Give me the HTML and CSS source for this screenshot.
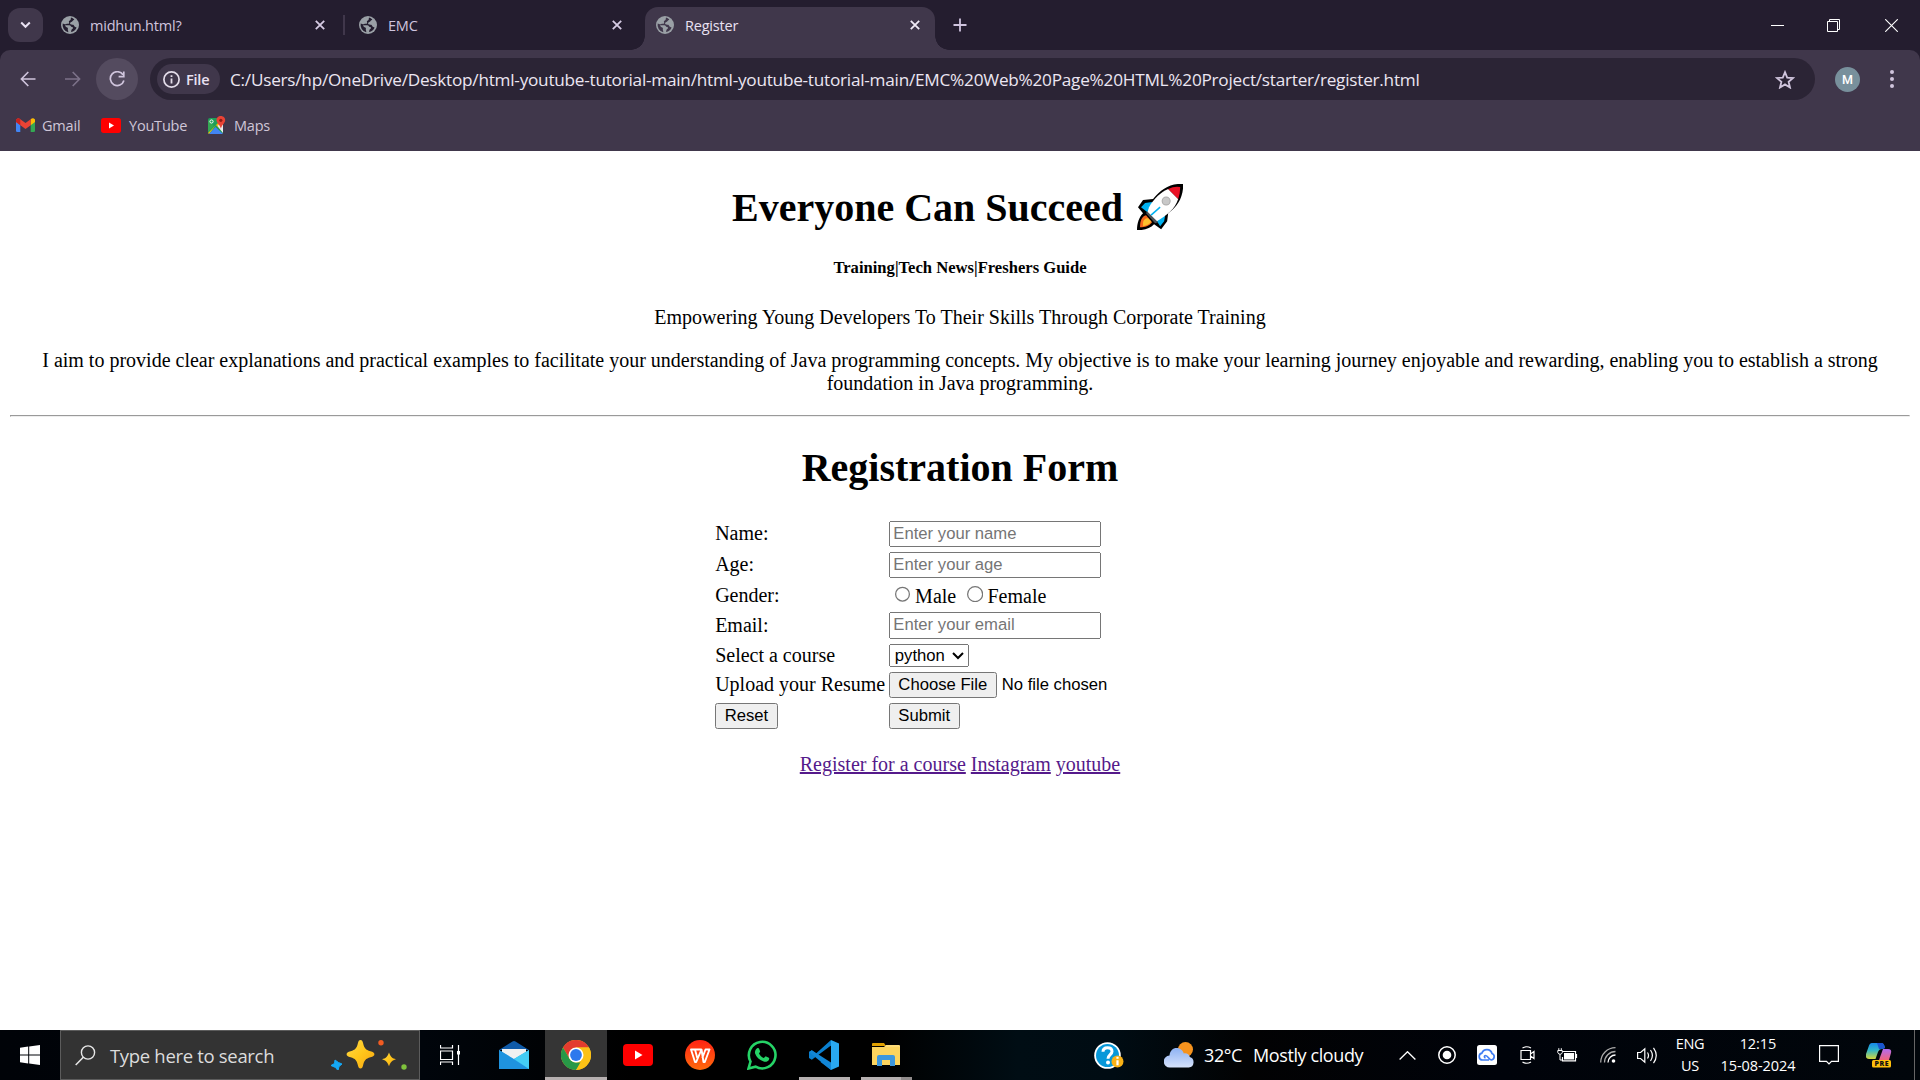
FILE: index.html
```html
<!DOCTYPE html>
<html lang="en">
<head>
<meta charset="utf-8">
<title>Register</title>
<link rel="stylesheet" href="styles.css">
</head>
<body>
<svg class="defs" width="0" height="0">
  <symbol id="globe" viewBox="0 0 18 18"><circle cx="9" cy="9" r="9" fill="#9aa0a6"/><path d="M10 1.6c-.5 1 .3 2-.8 2.600-1.300.5-1.600 1.300-1.100 2.300.5.900-.6 1.300-1.600 1.200-1.300 0-1.500.9-2.800.5L1.700 7.500a7.400 7.400 0 0 0 5.500 8.700c.4-1.200-.8-2.100-.3-3.200.3-.8-.3-1.500-1.200-1.700-1-.3-1.300-1.300-1.700-2.100 1.700-.2 3 .1 4.400.1 1.400.2 1.200 1.500 2.600 1.700 1.300.2 1.400 1.500.2 2-.9.5-.9 1.800-1.100 3a7.300 7.300 0 0 0 5.500-4.500c-.8-.4-1.800-.4-2.200-1.300-.4-1-.8-1.600-2-1.500-1.500 0-2.600-.6-2.300-1.700.3-1 1.800-.7 2.300-1.700.4-.9 1.400-1 1.900-1.800A7 7 0 0 0 10 1.600z" fill="currentColor"/></symbol>
  <symbol id="cross" viewBox="0 0 10 10"><path d="M.8.8l8.400 8.400M9.200.8L.8 9.200" fill="none" stroke="currentColor" stroke-width="1.800"/></symbol>
  <symbol id="youtube" viewBox="0 0 30 22"><rect width="30" height="22" rx="4" fill="#f00"/><path d="M12 6.500v9l7.500-4.500z" fill="#fff"/></symbol>
</svg>

<div class="tabstrip">
  <div class="tab-search"><svg width="11" height="8" viewBox="0 0 11 8"><path d="M1.200 1.500l4.300 4.300 4.300-4.300" fill="none" stroke="#e9e1f2" stroke-width="2"/></svg></div>
  <div class="tab first"><svg class="globe"><use href="#globe"/></svg><span>midhun.html?</span><svg class="x"><use href="#cross"/></svg></div>
  <div class="tab-sep"></div>
  <div class="tab second"><svg class="globe"><use href="#globe"/></svg><span>EMC</span><svg class="x"><use href="#cross"/></svg></div>
  <div class="tab active"><svg class="globe"><use href="#globe"/></svg><span>Register</span><svg class="x"><use href="#cross"/></svg></div>
  <svg class="plus" width="14" height="14" viewBox="0 0 14 14"><path d="M7 .5v13M.5 7h13" stroke="#cfc4de" stroke-width="1.800"/></svg>
  <div class="window-controls">
    <svg viewBox="0 0 13 13"><path d="M0 6.500h13" stroke="#fff" stroke-width="1"/></svg>
    <svg class="restore" viewBox="0 0 13 13"><path d="M.5 2.500h10v10H.5zM2.500 2.500v-2h10v10h-2" fill="none" stroke="#fff"/></svg>
    <svg viewBox="0 0 13 13"><path d="M.2.2l12.600 12.600M12.800.2L.2 12.800" stroke="#fff" stroke-width="1.100"/></svg>
  </div>
</div>

<div class="toolbar">
  <div class="navbar">
    <svg class="back" width="16" height="16" viewBox="0 0 16 16"><path d="M15.500 8H1.500M8.300 1L1.400 8l6.900 7" fill="none" stroke="#d0c5dd" stroke-width="1.600"/></svg>
    <svg class="forward" width="16" height="16" viewBox="0 0 16 16"><path d="M0 8h14.500M7.700 1l6.900 7-6.900 7" fill="none" stroke="#7c7289" stroke-width="1.600"/></svg>
    <div class="reload"><svg width="16" height="16" viewBox="0 0 16 16"><path d="M14 3.800A6.900 6.900 0 1 0 14.900 9.500M14.800.5v5.200H9.600" fill="none" stroke="#d0c5dd" stroke-width="1.700"/></svg></div>
    <div class="omnibox">
      <div class="chip"><svg width="17" height="17" viewBox="0 0 17 17"><circle cx="8.500" cy="8.500" r="7.600" fill="none" stroke="#e3dce9" stroke-width="1.700"/><path d="M8.500 7.500v5M8.500 4.200v1.800" stroke="#e3dce9" stroke-width="1.800"/></svg><b>File</b></div>
      <span class="url">C:/Users/hp/OneDrive/Desktop/html-youtube-tutorial-main/html-youtube-tutorial-main/EMC%20Web%20Page%20HTML%20Project/starter/register.html</span>
      <svg class="star" width="20" height="19" viewBox="0 0 20 19"><path d="M10 2.200l2.200 5.400 5.800.4-4.400 3.800 1.400 5.700-5-3.100-5 3.100 1.400-5.700L2 8l5.800-.4z" fill="none" stroke="#d0c5dd" stroke-width="1.800"/></svg>
    </div>
    <div class="avatar">M</div>
    <svg class="dots" width="4" height="18" viewBox="0 0 4 18"><g fill="#d0c5dd"><circle cx="2" cy="2" r="2"/><circle cx="2" cy="9" r="2"/><circle cx="2" cy="16" r="2"/></g></svg>
  </div>
  <div class="bookmarks">
    <svg width="19" height="14" viewBox="0 0 19 14"><path d="M0 3h4.300v11H1.300Q0 14 0 12.700z" fill="#4285f4"/><path d="M14.700 3H19v9.700q0 1.300-1.300 1.300h-3z" fill="#34a853"/><path d="M14.700 1.200Q17-1 19 1.500V4l-4.300 3.300z" fill="#fbbc04"/><path d="M0 1.800Q1.700-1 4.300 1.200L9.500 5l5.200-3.800v6L9.500 11 0 4z" fill="#ea4335"/><path d="M0 1.800Q1.700-1 4.300 1.200v6L0 4z" fill="#c5221f"/></svg><span class="gmail">Gmail</span>
    <svg width="20" height="15" viewBox="0 0 30 22" preserveAspectRatio="none"><use href="#youtube"/></svg><span class="yt">YouTube</span>
    <svg width="19" height="19" viewBox="0 0 19 19"><rect x="1" y="2" width="15" height="16" rx="2" fill="#1e9e58"/><path d="M7 10l-6 6V4z" fill="#34a853"/><path d="M1 17L12 6l4 4v6L9 9 2 18z" fill="#fbbc04"/><path d="M8.500 11l7.500 7H2z" fill="#4285f4"/><path d="M10.500 10L16 4v13z" fill="#e8eaed"/><circle cx="4.500" cy="5.500" r="1.600" fill="none" stroke="#fff"/><path d="M13.700 0c3 0 5 2.200 4.400 5-.5 2.300-3 3.700-4.200 7.500-1.100-3.800-3.800-5.200-4.300-7.500C9 2.200 11 0 13.700 0z" fill="#ea4335"/><circle cx="13.800" cy="4.300" r="1.600" fill="#8c1d18"/></svg><span class="maps">Maps</span>
  </div>
</div>

<main class="page">
  <header>
    <h1 class="title"><span>Everyone Can Succeed</span><svg class="rocket" viewBox="0 0 46 46"><path d="M46 0C33-1 24 5 16 15L6 16 1 23l5 6C2 33 0 39 0 46c8 0 13-2 17-6l7 5 6-8 1-8C41 22 46 13 46 0z" fill="#000"/><path d="M15 18l-7 1-4 4 9 7zM28 31l-1 6-4 5-5-8z" fill="#00b1f0"/><path d="M3 43c0-7 2-11 6-12l6 7c-3 4-7 5-12 5z" fill="#f7671c"/><path d="M6 39c0-3 2-5 5-5l3 3c-1 3-4 4-8 5z" fill="#ffc22d"/><path d="M31 5C24 8 17 14 12 23l-2 6 8 9C31 31 38 24 41 15z" fill="#fff"/><path d="M31 5q6-3 12-2 0 6-2 12z" fill="#ea1226"/><path d="M10 27l11 11-3 1-9-10z" fill="#4a5056"/><path d="M14 31l9-8" stroke="#00b1f0" stroke-width="1.500"/><circle cx="29" cy="17" r="4" fill="#c8c8c8" stroke="#aaa" stroke-width="1"/></svg></h1>
    <h5>Training|Tech News|Freshers Guide</h5>
    <p>Empowering Young Developers To Their Skills Through Corporate Training</p>
    <p>I aim to provide clear explanations and practical examples to facilitate your understanding of Java programming concepts. My objective is to make your learning journey enjoyable and rewarding, enabling you to establish a strong foundation in Java programming.</p>
  </header>
  <hr>
  <h1>Registration Form</h1>
  <form>
    <table>
      <tr><td>Name:</td><td><input type="text" placeholder="Enter your name"></td></tr>
      <tr><td>Age:</td><td><input type="text" placeholder="Enter your age"></td></tr>
      <tr><td>Gender:</td><td><input type="radio" name="gender">Male <input type="radio" name="gender">Female</td></tr>
      <tr><td>Email:</td><td><input type="text" placeholder="Enter your email"></td></tr>
      <tr><td>Select a course</td><td><select><option>python</option></select></td></tr>
      <tr><td>Upload your Resume</td><td><input type="file"></td></tr>
      <tr><td><button type="reset">Reset</button></td><td><button type="button">Submit</button></td></tr>
    </table>
  </form>
  <footer><a href="#">Register for a course</a> <a href="#">Instagram</a> <a href="#">youtube</a></footer>
</main>

<div class="taskbar">
  <div class="cell start"><svg width="20" height="20" viewBox="0 0 20 20"><path d="M0 2.800L8.200 1.600v7.900H0zM9.200 1.400L20 0v9.500H9.200zM0 10.500h8.200v7.900L0 17.200zM9.200 10.500H20V20L9.200 18.600z" fill="#fff"/></svg></div>
  <div class="search">
    <svg width="21" height="21" viewBox="0 0 21 21"><circle cx="13" cy="7.500" r="6.600" fill="none" stroke="#e8e8e8" stroke-width="1.400"/><path d="M8.300 12.200L.7 20" stroke="#e8e8e8" stroke-width="1.500"/></svg>
    <span>Type here to search</span>
    <svg class="spark" width="76" height="30" viewBox="0 0 76 30"><defs><linearGradient id="gold" x2="1" y2="1"><stop stop-color="#ffd94a"/><stop offset=".5" stop-color="#ffc61a"/><stop offset="1" stop-color="#f7a415"/></linearGradient></defs><path d="M29.500 0c1.500 0 2 1 2.600 3.300 1.200 5 2.500 6.500 7.300 8 2.800.8 4 1.600 4 3s-1.200 2.200-4 3c-4.800 1.500-6.100 3-7.300 8-.6 2.300-1.100 3.200-2.600 3.200s-2-1-2.600-3.200c-1.200-5-2.500-6.500-7.300-8-2.800-.8-4-1.600-4-3s1.200-2.200 4-3c4.800-1.500 6.100-3 7.300-8C27.500 1 28 0 29.500 0z" fill="url(#gold)"/><path d="M58 12.500c2 5 3 5.500 7 6.800-4 1.400-5 2-7 6.900-2-4.900-3-5.500-7-6.900 4-1.300 5-1.800 7-6.800z" fill="url(#gold)"/><path d="M4 20l3.500 2.500L11 24l-3 2.500-1 4-2.500-3-4.500-2 3.500-2z" fill="#14a8f5" stroke="#14a8f5"/><circle cx="50" cy="2.700" r="2.700" fill="#f25c22"/><circle cx="73" cy="27" r="2.700" fill="#7fc23c"/></svg>
  </div>
  <div class="cell view"><svg width="20" height="20" viewBox="0 0 20 20"><path d="M.5 0v3h12V0M.5 6h12v8.500H.5zM.5 20v-3h12v3M18.500 0v20" fill="none" stroke="#fff" stroke-width="1.200"/><rect x="17" y="6" width="3" height="3.500" fill="#fff"/></svg></div>
  <div class="cell app"><svg width="30" height="28" viewBox="0 0 30 28"><path d="M0 9L13.500.5q1.500-.8 3 0L30 9z" fill="#0f5aa8"/><path d="M3 8h24v12H3z" fill="#f1f1f1"/><path d="M0 9l15 9L30 9v19H0z" fill="#2ba5e8"/><path d="M0 9l30 19H0z" fill="#1f93df"/><path d="M30 9v19L15 18z" fill="#43cdf5"/></svg></div>
  <div class="cell app chrome"><svg width="30" height="30" viewBox="0 0 30 30"><circle cx="15" cy="15" r="15" fill="#fbc116"/><path d="M2 7.500a15 15 0 0 1 26 0H15L8.500 18.800z" fill="#e33b2e"/><path d="M2 7.500l6.500 11.300Q11 22.500 15 22.500h6.500L15 30A15 15 0 0 1 2 7.500z" fill="#279847"/><path d="M21.500 18.800L15 30a15 15 0 0 0 13-22.500H15l6.500 4z" fill="#fbc116"/><circle cx="15" cy="15" r="7.500" fill="#fff"/><circle cx="15" cy="15" r="5.900" fill="#2d79ed"/></svg></div>
  <div class="cell app"><svg width="30" height="22"><use href="#youtube"/></svg></div>
  <div class="cell app"><svg width="30" height="30" viewBox="0 0 30 30"><defs><linearGradient id="wps" x2="0" y2="1"><stop stop-color="#ff2414"/><stop offset="1" stop-color="#ff6a0c"/></linearGradient></defs><circle cx="15" cy="15" r="15" fill="url(#wps)"/><path d="M16.500 9.500H6l4 12.500h1.200L16.500 9.500l2 12.500h1.300L24.500 9.500h-4L17.300 18M10 9.500l2.300 8.500" fill="none" stroke="#fff" stroke-width="1.900" stroke-linejoin="round"/></svg></div>
  <div class="cell app"><svg width="30" height="30" viewBox="0 0 30 30"><path d="M1.500 28.500l2-7A13.300 13.300 0 1 1 8.600 26.700z" fill="none" stroke="#25d366" stroke-width="2.600"/><path d="M10.500 8c.8-.3 1.300 0 1.600.8l1 2.400c.3.800-1.300 1.800-1 2.500 1 2 2.500 3.300 4.600 4.200.8.300 1.600-1.900 2.400-1.500l2.700 1.300c.6.300.5 1 .1 2-1 2-3.300 2.500-5.300 1.800-4.500-1.500-7.300-4.500-8.500-7.900-.6-2 .7-5 2.400-5.600z" fill="#25d366"/></svg></div>
  <div class="cell app run"><svg width="30" height="30" viewBox="0 0 30 30"><path d="M22 0L7 13.500 2.800 10.200 0 12v6l2.800 1.800L22 5.500v19L15 19l-3.500 3L22 30z" fill="#0a7fcf"/><path d="M2.800 10.200L0 12l22 18v-7.500z" fill="#1286d6"/><path d="M22 0l8 3.500v23L22 30z" fill="#29a8f0"/></svg></div>
  <div class="cell app run files"><svg width="28" height="24" viewBox="0 0 28 24"><path d="M0 1q0-1 1-1h11l2 3H0z" fill="#e0a000"/><path d="M14 2h13q1 0 1 1v3H0V4h12z" fill="#ffdc78"/><path d="M0 4h28v18H0z" fill="#fcd45e"/><path d="M5 23V14q0-2 2-2h14q2 0 2 2v9h-5v-6h-8v6z" fill="#3d97dd"/></svg></div>
  <div class="cell help"><svg width="30" height="27" viewBox="0 0 30 27"><circle cx="13.500" cy="13.500" r="13.300" fill="#fff"/><circle cx="13.500" cy="13.500" r="11.500" fill="#0798d9"/><path d="M9 9.800q0-4 4.500-4t4.500 3.700c0 3-4 3.300-4 7.200" fill="none" stroke="#fff" stroke-width="3"/><circle cx="14" cy="20.500" r="2" fill="#fff"/><circle cx="23.500" cy="19.500" r="6" fill="#f9b115"/><path d="M23.500 18.200v5M23.500 14.700v2" stroke="#fff" stroke-width="2.200"/></svg></div>
  <div class="weather"><svg width="31" height="26" viewBox="0 0 31 26"><defs><linearGradient id="cloud" x2="0" y2="1"><stop stop-color="#8eb2f3"/><stop offset="1" stop-color="#d5e2fb"/></linearGradient></defs><circle cx="21.500" cy="7.500" r="7.500" fill="#f6931e"/><path d="M6 25.500a6 6 0 0 1-.5-12C6 8.500 9 6 12.500 6c4 0 6.500 2.500 7.300 5.500 3-.6 5.500 1 6 3.500a5.400 5.400 0 0 1-1 10.500z" fill="url(#cloud)"/></svg><span class="temp">32°C</span><span class="sky">Mostly cloudy</span></div>
  <div class="tray">
    <svg class="up" width="17" height="9" viewBox="0 0 17 9"><path d="M.6 8.500l7.900-7.800 7.900 7.800" fill="none" stroke="#fff" stroke-width="1.300"/></svg>
    <svg class="rec" width="18" height="18" viewBox="0 0 18 18"><circle cx="9" cy="9" r="8.200" fill="none" stroke="#fff" stroke-width="1.500"/><circle cx="9" cy="9" r="4.300" fill="#fff"/></svg>
    <svg class="drive" width="20" height="20" viewBox="0 0 20 20"><rect width="20" height="20" rx="2.500" fill="#fff"/><path d="M12 15H5.500a3.500 3.500 0 0 1-.6-6.900A5.300 5.300 0 0 1 15 8.500a3.400 3.400 0 0 1-.5 6.500c-2.500 0-3.500-4.500-6-4.500-1.500 0-1.500 2 0 2.300" fill="none" stroke="#3f7df3" stroke-width="1.700"/></svg>
    <svg class="cam" width="15" height="18" viewBox="0 0 15 18"><path d="M1 4.500h9.500v9H1zM10.500 8l3.500-2.500v7L10.500 10M2.500 2q4-2.500 8.500 0M2.500 16q4 2.500 8.500 0" fill="none" stroke="#fff" stroke-width="1.200"/></svg>
    <svg class="bat" width="21" height="14" viewBox="0 0 21 14"><path d="M5.500 3.500h13v9.300h-13V9M19.500 6v4" fill="none" stroke="#fff" stroke-width="1.200"/><path d="M7 5h10v6.500H7z" fill="#fff"/><path d="M.8 2.500h4.500v2q-.5 1.800-2.200 1.800T.8 4.500zM1.800.2v2M4.300.2v2M3 6.300V12h2" fill="none" stroke="#fff"/></svg>
    <svg class="wifi" width="16" height="16" viewBox="0 0 16 16"><g fill="none" stroke="#aaa" stroke-width="1.300"><path d="M.7 15.500A14.800 14.800 0 0 1 15.500.7M4.500 15.500a11 11 0 0 1 11-11"/><path stroke="#fff" d="M8 15.500A7.500 7.500 0 0 1 15.500 8"/></g><circle cx="13.500" cy="14" r="1.800" fill="#fff"/></svg>
    <svg class="vol" width="21" height="17" viewBox="0 0 21 17"><path d="M.6 5.500h3L7.800 1.800v13.400L3.600 11.500h-3zM10.500 5.500q2 3 0 6M13.500 3q3.800 5.500 0 11M16.500.8q5.500 7.700 0 15.400" fill="none" stroke="#fff" stroke-width="1.200"/></svg>
  </div>
  <div class="lang"><span>ENG</span><span>US</span></div>
  <div class="clock"><span>12:15</span><span>15-08-2024</span></div>
  <svg class="note" width="20" height="20" viewBox="0 0 20 20"><path d="M.6.6h18.800v15.800h-6.900L10 19l-2.500-2.600H.6z" fill="none" stroke="#fff" stroke-width="1.200"/></svg>
  <svg class="copilot" width="26" height="25" viewBox="0 0 26 25"><defs><linearGradient id="cl" x2="0" y2="1"><stop stop-color="#1688e8"/><stop offset=".45" stop-color="#32b8c8"/><stop offset="1" stop-color="#d5d63a"/></linearGradient><linearGradient id="cr" x2="0" y2="1"><stop stop-color="#b26cf0"/><stop offset="1" stop-color="#f2647a"/></linearGradient></defs><path d="M6 0h9q3 0 4 5l-3 1q-3 0-4 3l-2.500 7H3q-4 0-3-5L2.500 4Q3.500 0 6 0z" fill="url(#cl)"/><path d="M17 6h5q4 0 3 4l-2 7H13z" fill="url(#cr)"/><path d="M11 0h5q2 0 3 5l-3 1-3 0z" fill="#1a55cf"/><rect x="6" y="17" width="19" height="7.500" rx="1.500" fill="#ffc00d"/><text x="15.500" y="23.200" text-anchor="middle" font-size="7" font-weight="800" textLength="14" font-family="Open Sans, sans-serif" fill="#111">PRE</text></svg>
</div>
</body>
</html>
```
FILE: styles.css
```css
* { box-sizing: border-box; }
body {
  margin: 0;
  width: 1920px;
  height: 1080px;
  overflow: hidden;
  display: flex;
  flex-direction: column;
  background: linear-gradient(#241d2f 70px, #fff 70px);
  font-family: "Open Sans", "Noto Sans", sans-serif;
}
svg { flex: none; display: block; }
.defs { position: absolute; }

/* tab strip */
.tabstrip {
  height: 50px;
  flex: none;
  display: flex;
  align-items: center;
  background: #241d2f;
  color: #241d2f;
}
.tab-search {
  width: 35px; height: 34px; margin-left: 8px;
  border-radius: 12px;
  background: #40374b;
  display: flex; align-items: center; justify-content: center;
}
.tab { display: flex; align-items: center; height: 43px; flex: none; }
.tab.first { width: 284px; margin-left: 16px; padding: 0 18px 0 2px; }
.tab-sep { width: 2px; height: 20px; background: #40374b; flex: none; }
.tab.second { width: 278px; margin-left: 14px; padding-right: 15px; }
.tab.active {
  width: 290px; height: 43px; margin-top: 7px; margin-left: 8px;
  padding: 0 15px 7px 11px;
  background: #40374b; color: #40374b;
  border-radius: 13px 13px 0 0;
  position: relative;
}
.tab.active::before, .tab.active::after {
  content: ""; position: absolute; bottom: 0; width: 14px; height: 14px;
}
.tab.active::before { left: -14px; background: radial-gradient(circle at 0 0, transparent 13.5px, #40374b 14px); }
.tab.active::after { right: -14px; background: radial-gradient(circle at 100% 0, transparent 13.5px, #40374b 14px); }
.tab .globe { width: 18px; height: 18px; }
.tab span { margin-left: 11px; font-size: 14.5px; color: #cfc4de; letter-spacing: -0.2px; flex: 1; }
.tab.active span { color: #e9e1f2; }
.tab .x { width: 10px; height: 10px; color: #d6cbe4; }
.tab.active .x { color: #f0eaf6; }
.plus { margin-left: 18px; }
.window-controls { margin-left: auto; display: flex; gap: 44px; padding-right: 22px; }
.window-controls svg { width: 13px; height: 13px; }
.window-controls .restore { margin: 0 1px 0 -1px; }

/* toolbar */
.toolbar {
  height: 101px; flex: none; padding-top: 8px;
  background: #40374b;
  border-radius: 10px 10px 0 0;
}
.navbar { display: flex; align-items: center; height: 42px; }
.back { margin-left: 20px; }
.forward { margin-left: 29px; }
.reload {
  width: 42px; height: 42px; margin-left: 15px; border-radius: 50%;
  background: #544b5f;
  display: flex; align-items: center; justify-content: center;
}
.omnibox {
  width: 1665px; height: 42px; margin-left: 12px;
  border-radius: 21px; background: #2b2435;
  display: flex; align-items: center; padding: 0 20px 0 7px;
}
.chip {
  width: 63px; height: 30px; border-radius: 15px; background: #40374b;
  display: flex; align-items: center; gap: 6px; padding-left: 6px;
  font-size: 14.5px; color: #e9e1f2; flex: none;
}
.chip b { font-weight: 600; letter-spacing: -0.2px; }
.url { margin-left: 10px; font-size: 17.2px; color: #ece6f2; white-space: nowrap; letter-spacing: -0.243px; }
.star { margin-left: auto; }
.avatar {
  width: 25px; height: 25px; margin-left: 20px; border-radius: 50%;
  background: #78909c; color: #fff; font: 500 12.5px/25px Roboto, sans-serif; text-align: center;
}
.dots { margin-left: 30px; }
.bookmarks { display: flex; align-items: center; height: 50px; padding-left: 16px; font-size: 14.5px; color: #cfc6d8; }
.bookmarks span { margin-left: 7px; letter-spacing: -0.2px; }
.bookmarks .yt, .bookmarks .maps { margin-left: 8px; }
.gmail { width: 59px; }
.yt { width: 78px; }

/* document */
.page {
  flex: 1;
  zoom: 1.25;
  background: #fff;
  color: #000;
  padding: 0 8px;
  overflow: hidden;
  font-family: "Liberation Serif", "Times New Roman", serif;
  font-size: 16px;
  text-align: center;
}
.page h1 { margin: 21.44px 0; font-size: 32px; }
.page h1.title { display: flex; justify-content: center; align-items: center; height: 42.4px; padding-top: 5.4px; }
.rocket { width: 37px; height: 37px; margin: -1.4px 4px 0 11px; }
.page h5 { margin: 22px 0; font-size: 13.28px; }
.page table { margin: 0 auto; text-align: left; border-spacing: 2px; }
.page td { padding: 1px; }
.page td:first-child { padding-right: 0.4px; }
.page td:last-child { padding-right: 1.8px; }
.page input, .page select, .page button { font-family: "Liberation Sans", Arial, sans-serif; font-size: 13.333px; }
.page input[type="text"] { width: 169.6px; }
.page select { width: 64px; }
.page footer { margin-top: 16.8px; }
.page a { color: #551a8b; }

/* taskbar */
.taskbar {
  height: 50px; flex: none; display: flex; align-items: center;
  background: linear-gradient(90deg, #000308, #00050b 22%, #000 33%, #000 46%, #000d14 53%, #000c13 58%, #020203 65%, #00030a 78%, #01060b);
  color: #fff;
}
.cell { height: 50px; display: flex; align-items: center; justify-content: center; flex: none; }
.start { width: 60px; }
.search {
  width: 360px; height: 50px; flex: none; background: #333; border: 1px solid #5c5c5c;
  display: flex; align-items: center; padding: 0 12px 0 14px; font-size: 18.5px; color: #dcdcdc;
}
.search span { margin-left: 14px; letter-spacing: -0.32px; }
.spark { margin-left: auto; }
.view { width: 60px; margin-right: 3px; }
.app { width: 62px; }
.chrome { background: #353535; border-bottom: 3px solid #b6b0b0; padding-top: 3px; }
.run { background: linear-gradient(#b6b0b0, #b6b0b0) 50% 100% / 51px 3px no-repeat; }
.files { background: linear-gradient(90deg, #b6b0b0 40px, #918c8c 40px) 50% 100% / 51px 3px no-repeat; }
.help { margin-left: 177px; width: 30px; }
.weather { display: flex; align-items: center; margin-left: 40px; font-size: 18px; width: 235px; white-space: nowrap; letter-spacing: -0.4px; flex: none; }
.temp { margin-left: 9px; }
.sky { margin-left: 11px; }
.tray { display: flex; align-items: center; flex: none; }
.rec { margin-left: 22px; }
.drive { margin-left: 21px; }
.cam { margin-left: 23px; }
.bat { margin-left: 22px; }
.wifi { margin-left: 22px; }
.vol { margin-left: 21px; }
.lang, .clock { display: flex; flex-direction: column; align-items: center; font-size: 14.5px; line-height: 22.5px; letter-spacing: -0.3px; flex: none; }
.lang { width: 32px; margin-left: 16px; }
.clock { width: 78px; margin-left: 13px; letter-spacing: -0.05px; }
.note { margin-left: 22px; }
.copilot { margin-left: 27px; }
.taskbar::after { content: ""; width: 1px; height: 50px; margin-left: 22px; background: #666; }
```
